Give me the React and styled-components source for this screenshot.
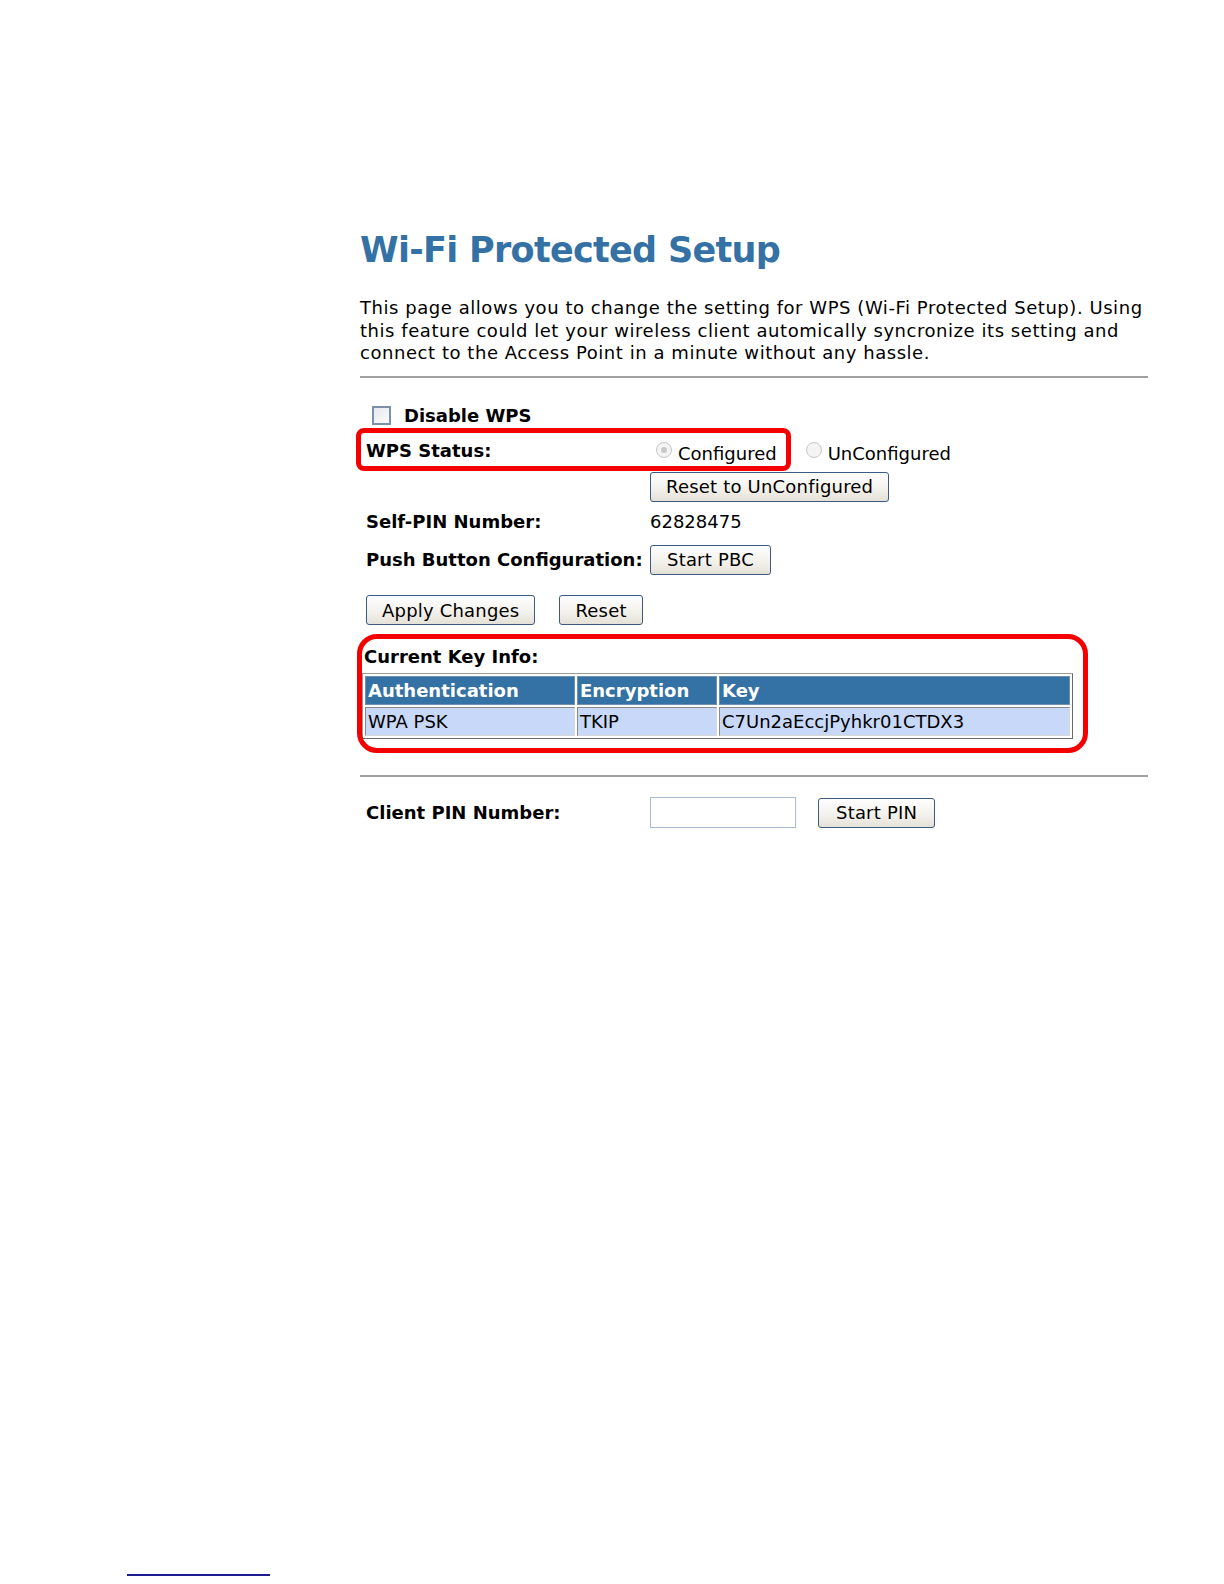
import React from 'react';
import styled, { createGlobalStyle } from 'styled-components';

const GlobalStyle = createGlobalStyle`
  html, body {
    margin: 0;
    padding: 0;
    background: #fff;
  }
  body {
    font-family: "DejaVu Sans", Verdana, sans-serif;
    color: #000;
  }
`;

const Page = styled.div`
  width: 1224px;
  height: 1584px;
  position: relative;
  box-sizing: border-box;
  padding: 226px 0 0 360px;
`;

const Content = styled.div`
  width: 788px;
`;

const Title = styled.h1`
  margin: 0;
  font-size: 35px;
  letter-spacing: -0.7px;
  line-height: 48px;
  font-weight: bold;
  color: #3471a4;
`;

const Intro = styled.p`
  margin: 23px 0 0 0;
  font-size: 18px;
  letter-spacing: 0.55px;
  line-height: 22.5px;
  white-space: nowrap;
`;

const Rule = styled.div`
  height: 2px;
  background: #a0a0a0;
  margin-top: ${(p) => p.$top}px;
`;

const Form = styled.div`
  padding-top: 21px;
`;

const Row = styled.div`
  display: flex;
  align-items: center;
  height: ${(p) => p.$h}px;
  padding-left: 6px;
  font-size: 18px;
`;

const Label = styled.div`
  width: 284px;
  font-weight: bold;
  flex-shrink: 0;
`;

const Value = styled.div`
  display: flex;
  align-items: center;
`;

const Check = styled.span`
  width: 15px;
  height: 15px;
  border: 2px solid #7d90aa;
  background: linear-gradient(135deg, #e4e8ee, #fbfbfb);
  margin: 0 13px 0 6px;
`;

const Bold = styled.span`
  font-weight: bold;
`;

const Radio = styled.span`
  width: 16px;
  height: 16px;
  border-radius: 50%;
  border: 1px solid #c6c6c6;
  background: #f4f4f4;
  box-sizing: border-box;
  display: inline-flex;
  align-items: center;
  justify-content: center;
  margin: ${(p) => (p.$first ? '0 6px 0 6px' : '0 6px 0 29px')};

  &::after {
    content: '';
    width: 6px;
    height: 6px;
    border-radius: 50%;
    background: ${(p) => (p.$checked ? '#c8c8c8' : 'transparent')};
  }
`;

const RadioText = styled.span`
  position: relative;
  top: 3px;
`;

const Button = styled.button`
  font-family: "DejaVu Sans", Verdana, sans-serif;
  font-size: 18px;
  letter-spacing: 0.2px;
  color: #000;
  height: 30px;
  padding: 0 ${(p) => p.$pad || 15}px;
  border: 1px solid #3d5a80;
  border-radius: 3px;
  background: linear-gradient(#ffffff, #f2f0ea 60%, #e4e1d7);
  margin-right: ${(p) => p.$gap || 0}px;
`;

const Overlay = styled.div`
  position: relative;
`;

const RedMark = styled.div`
  position: absolute;
  border: 5px solid #f40000;
  border-radius: ${(p) => p.$r}px;
  left: ${(p) => p.$l}px;
  top: ${(p) => p.$t}px;
  width: ${(p) => p.$w}px;
  height: ${(p) => p.$hgt}px;
  box-sizing: border-box;
  pointer-events: none;
`;

const KeySection = styled.div`
  padding-left: 2px;
  font-size: 18px;
`;

const KeyTitle = styled.div`
  font-weight: bold;
  height: 33px;
  display: flex;
  align-items: center;
  padding-left: 2px;
`;

const KeyTable = styled.table`
  width: 711px;
  border-collapse: separate;
  border-spacing: 2px;
  border: 1px solid #9a9a9a;
  border-right-color: #6a6a6a;
  border-bottom-color: #6a6a6a;
  font-size: 18px;
`;

const Th = styled.th`
  background: #3471a4;
  color: #fff;
  font-weight: bold;
  text-align: left;
  height: 27px;
  padding: 0 2px;
  border: 1px solid #6f8fad;
  width: ${(p) => p.$w}px;
`;

const Td = styled.td`
  background: #c8d8f8;
  height: 27px;
  padding: 0 2px;
  border: 1px solid #8a8a8a;
  border-right-color: #d8d8d8;
  border-bottom-color: #d8d8d8;
`;

const PinInput = styled.input`
  width: 146px;
  height: 31px;
  box-sizing: border-box;
  border: 1px solid #a9bcd6;
  margin-right: 22px;
  font-size: 18px;
`;

const FootLine = styled.div`
  position: absolute;
  left: 127px;
  top: 1574px;
  width: 143px;
  height: 2px;
  background: #1b1b8f;
`;

const keys = [{ auth: 'WPA PSK', enc: 'TKIP', key: 'C7Un2aEccjPyhkr01CTDX3' }];

export default function App() {
  return (
    <>
      <GlobalStyle />
      <Page>
        <Content>
          <Title>Wi-Fi Protected Setup</Title>
          <Intro>
            This page allows you to change the setting for WPS (Wi-Fi Protected Setup). Using
            <br />
            this feature could let your wireless client automically syncronize its setting and
            <br />
            connect to the Access Point in a minute without any hassle.
          </Intro>
          <Rule $top={11} />
          <Form>
            <Row $h={33}>
              <Check />
              <Bold>Disable WPS</Bold>
            </Row>
            <Overlay>
              <RedMark $l={-4} $t={-4} $w={435} $hgt={43} $r={8} />
              <Row $h={37}>
                <Label>WPS Status:</Label>
                <Value>
                  <Radio $first $checked />
                  <RadioText>Configured</RadioText>
                  <Radio />
                  <RadioText>UnConfigured</RadioText>
                </Value>
              </Row>
            </Overlay>
            <Row $h={36}>
              <Label />
              <Button>Reset to UnConfigured</Button>
            </Row>
            <Row $h={34}>
              <Label>Self-PIN Number:</Label>
              <Value>62828475</Value>
            </Row>
            <Row $h={42}>
              <Label>Push Button Configuration:</Label>
              <Button $pad={16}>Start PBC</Button>
            </Row>
            <Row $h={59}>
              <Button $gap={24}>Apply Changes</Button>
              <Button>Reset</Button>
            </Row>
            <Overlay>
              <RedMark $l={-3} $t={-6} $w={731} $hgt={119} $r={20} />
              <KeySection>
                <KeyTitle>Current Key Info:</KeyTitle>
                <KeyTable>
                  <thead>
                    <tr>
                      <Th $w={204}>Authentication</Th>
                      <Th $w={134}>Encryption</Th>
                      <Th>Key</Th>
                    </tr>
                  </thead>
                  <tbody>
                    {keys.map((k) => (
                      <tr key={k.key}>
                        <Td>{k.auth}</Td>
                        <Td>{k.enc}</Td>
                        <Td>{k.key}</Td>
                      </tr>
                    ))}
                  </tbody>
                </KeyTable>
              </KeySection>
            </Overlay>
          </Form>
          <Rule $top={36} />
          <Row $h={72}>
            <Label>Client PIN Number:</Label>
            <PinInput />
            <Button $pad={17}>Start PIN</Button>
          </Row>
        </Content>
        <FootLine />
      </Page>
    </>
  );
}
